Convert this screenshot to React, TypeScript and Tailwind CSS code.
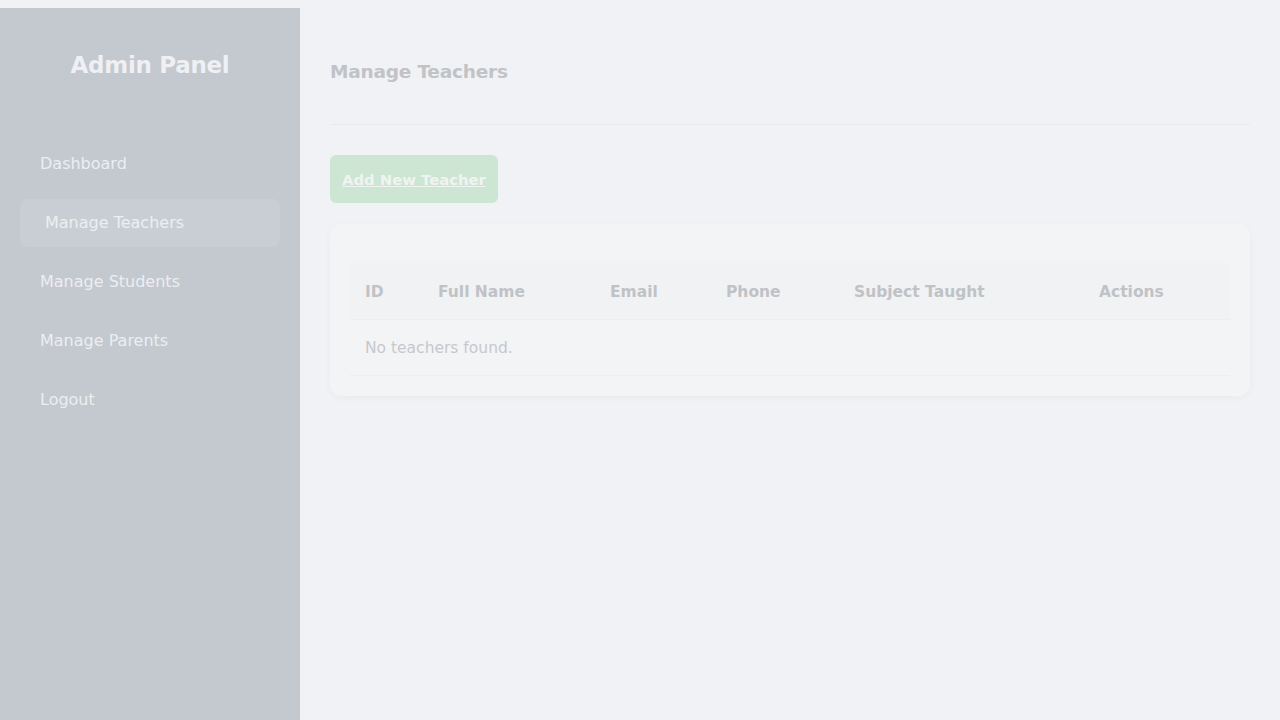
const navItems = ['Dashboard', 'Manage Teachers', 'Manage Students', 'Manage Parents', 'Logout'];

const columns = [
  { label: 'ID', width: 'w-[73px]' },
  { label: 'Full Name', width: 'w-[172px]' },
  { label: 'Email', width: 'w-[116px]' },
  { label: 'Phone', width: 'w-[128px]' },
  { label: 'Subject Taught', width: 'w-[245px]' },
  { label: 'Actions', width: '' },
];

function Sidebar() {
  return (
    <aside className="mt-2 flex h-[712px] w-[300px] shrink-0 flex-col bg-[#c4c8cf] px-5">
      <h2 className="mt-[42px] text-center text-[23px] leading-[30px] font-bold tracking-[-0.3px] text-[#eef0f3]">
        Admin Panel
      </h2>
      <nav className="mt-[60px] flex flex-col gap-[11px]">
        {navItems.map((item) => {
          const active = item === 'Manage Teachers';
          return (
            <a
              key={item}
              href="#"
              className={
                active
                  ? 'flex h-12 items-center rounded-lg bg-[#c9ced4] pl-[25px] text-base text-[#eceef1]'
                  : 'flex h-12 items-center rounded-lg pl-5 text-base text-[#eceef1]'
              }
            >
              {item}
            </a>
          );
        })}
      </nav>
    </aside>
  );
}

export default function App() {
  return (
    <div
      className="flex min-h-screen items-start bg-[#f0f2f5]"
      style={{ fontFamily: '"DejaVu Sans", "Noto Sans", sans-serif' }}
    >
      <Sidebar />
      <main className="flex-1 px-[30px] pt-[57px]">
        <div className="border-b border-[#e8eaee] pb-[37px]">
          <h1 className="text-[18.5px] leading-[30px] font-bold tracking-[-0.2px] text-[#c1c3c7]">
            Manage Teachers
          </h1>
        </div>

        <a
          href="#"
          className="mt-[30px] inline-flex h-12 items-center rounded-md bg-[#cde5d3] px-3 pt-[2px] text-[14.8px] font-bold text-[#f0f4f1] underline"
        >
          Add New Teacher
        </a>

        <div className="mt-[21px] rounded-xl bg-[#f3f4f6] p-5 shadow-[0_2px_10px_rgba(0,0,0,0.03)]">
          <table className="mt-[19px] w-full border-collapse text-left text-[15.5px]">
            <thead>
              <tr className="h-[56px] border-b border-[#eceef0] bg-[#f1f2f4]">
                {columns.map((c) => (
                  <th key={c.label} className={`${c.width} px-[15px] pt-[3px] font-semibold text-[#c0c2c6]`}>
                    {c.label}
                  </th>
                ))}
              </tr>
            </thead>
            <tbody>
              <tr className="h-[56px] border-b border-[#eceef0]">
                <td colSpan={6} className="px-[15px] pt-[3px] text-[#c7c8cc]">
                  No teachers found.
                </td>
              </tr>
            </tbody>
          </table>
        </div>
      </main>
    </div>
  );
}
